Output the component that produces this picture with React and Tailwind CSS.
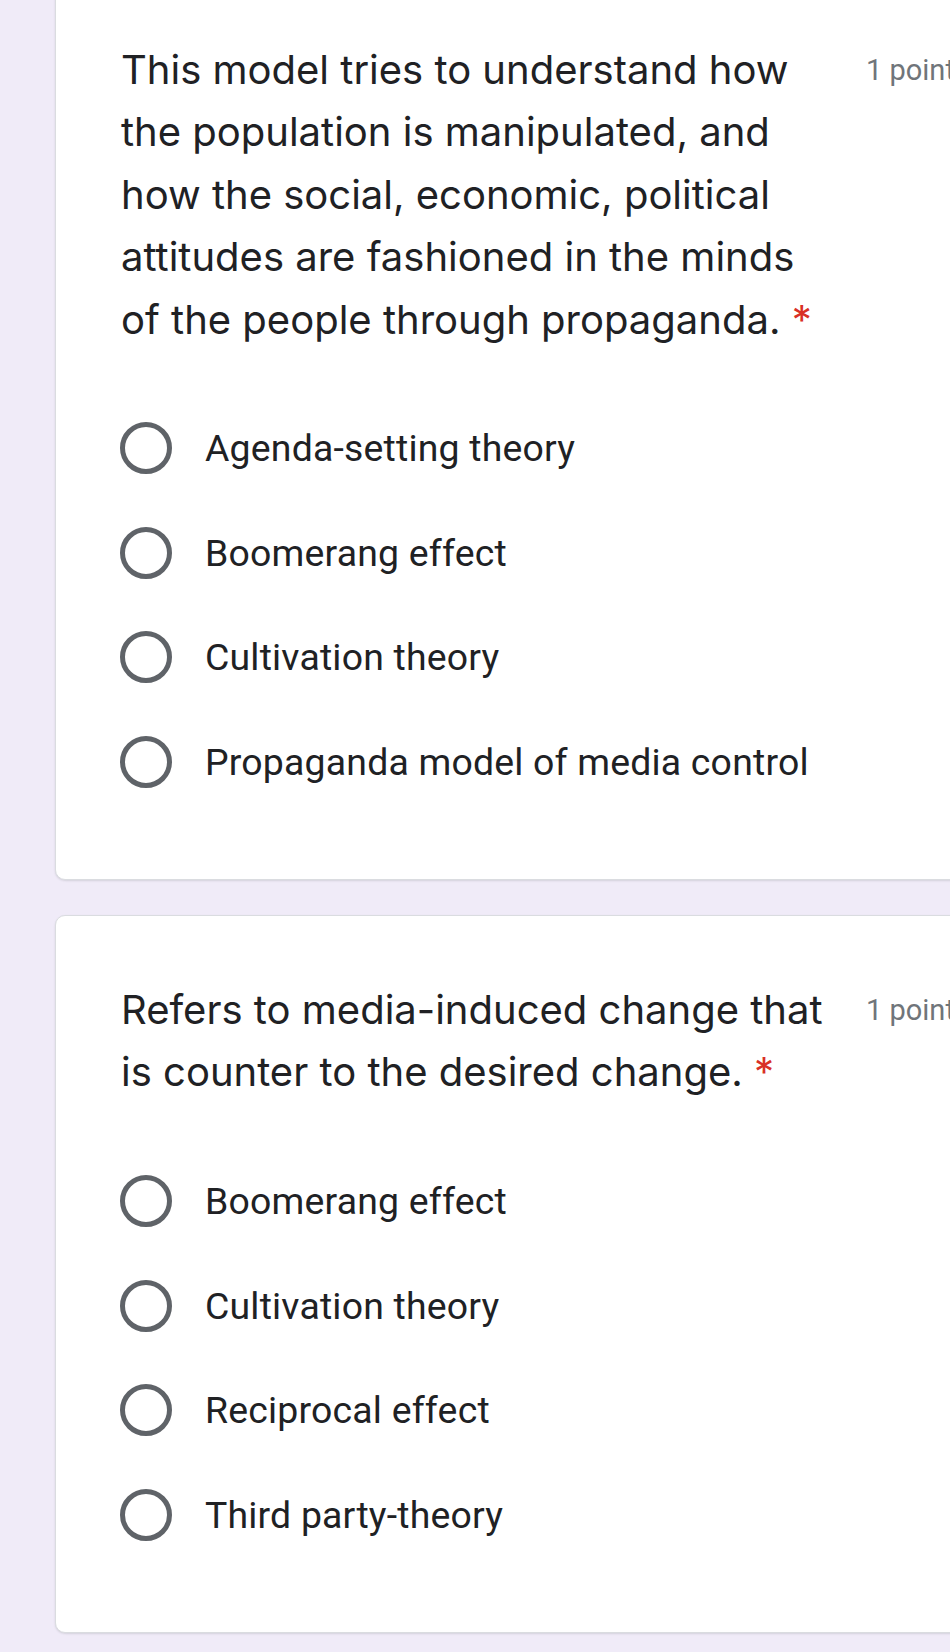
import React from 'react'

const Q_FONT = { fontFamily: 'Inter, "Noto Sans", sans-serif' }

const cards = [
  {
    title: 'This model tries to understand how the population is manipulated, and how the social, economic, political attitudes are fashioned in the minds of the people through propaganda.',
    options: ['Agenda-setting theory', 'Boomerang effect', 'Cultivation theory', 'Propaganda model of media control'],
  },
  {
    title: 'Refers to media-induced change that is counter to the desired change.',
    options: ['Boomerang effect', 'Cultivation theory', 'Reciprocal effect', 'Third party-theory'],
  },
]

function Radio() {
  return <div className="w-[52px] h-[52px] shrink-0 rounded-full border-[5px] border-[#5f6368]" />
}

function QuestionCard({ title, options }) {
  return (
    <div className="w-[1000px] ml-[55px] bg-white border border-[#dadce0] rounded-[10px] shadow-[0_1px_2px_rgba(60,64,67,0.15)] pl-[65px] pt-[63px] pb-[65px]">
      <div className="flex items-start">
        <div className="w-[720px] text-[40px] leading-[62.4px] text-[#202124]" style={Q_FONT}>
          {title} <span className="text-[#d93025]">*</span>
        </div>
        <div className="ml-[25px] text-[29px] leading-[62.4px] text-[#70757a] font-['Roboto',sans-serif] whitespace-nowrap">
          1 point
        </div>
      </div>
      <div className="mt-[45px] flex flex-col">
        {options.map((o) => (
          <div key={o} className="h-[104.5px] flex items-center gap-[33px] -ml-[1px]">
            <Radio />
            <span className="text-[37.4px] text-[#202124] font-['Roboto',sans-serif] tracking-[0.2px]">{o}</span>
          </div>
        ))}
      </div>
    </div>
  )
}

export default function App() {
  return (
    <div className="w-[950px] h-[1652px] overflow-hidden bg-[#f0ebf8]">
      <div className="-mt-[25px] flex flex-col gap-[35px]">
        {cards.map((c, i) => (
          <QuestionCard key={i} {...c} />
        ))}
      </div>
    </div>
  )
}
